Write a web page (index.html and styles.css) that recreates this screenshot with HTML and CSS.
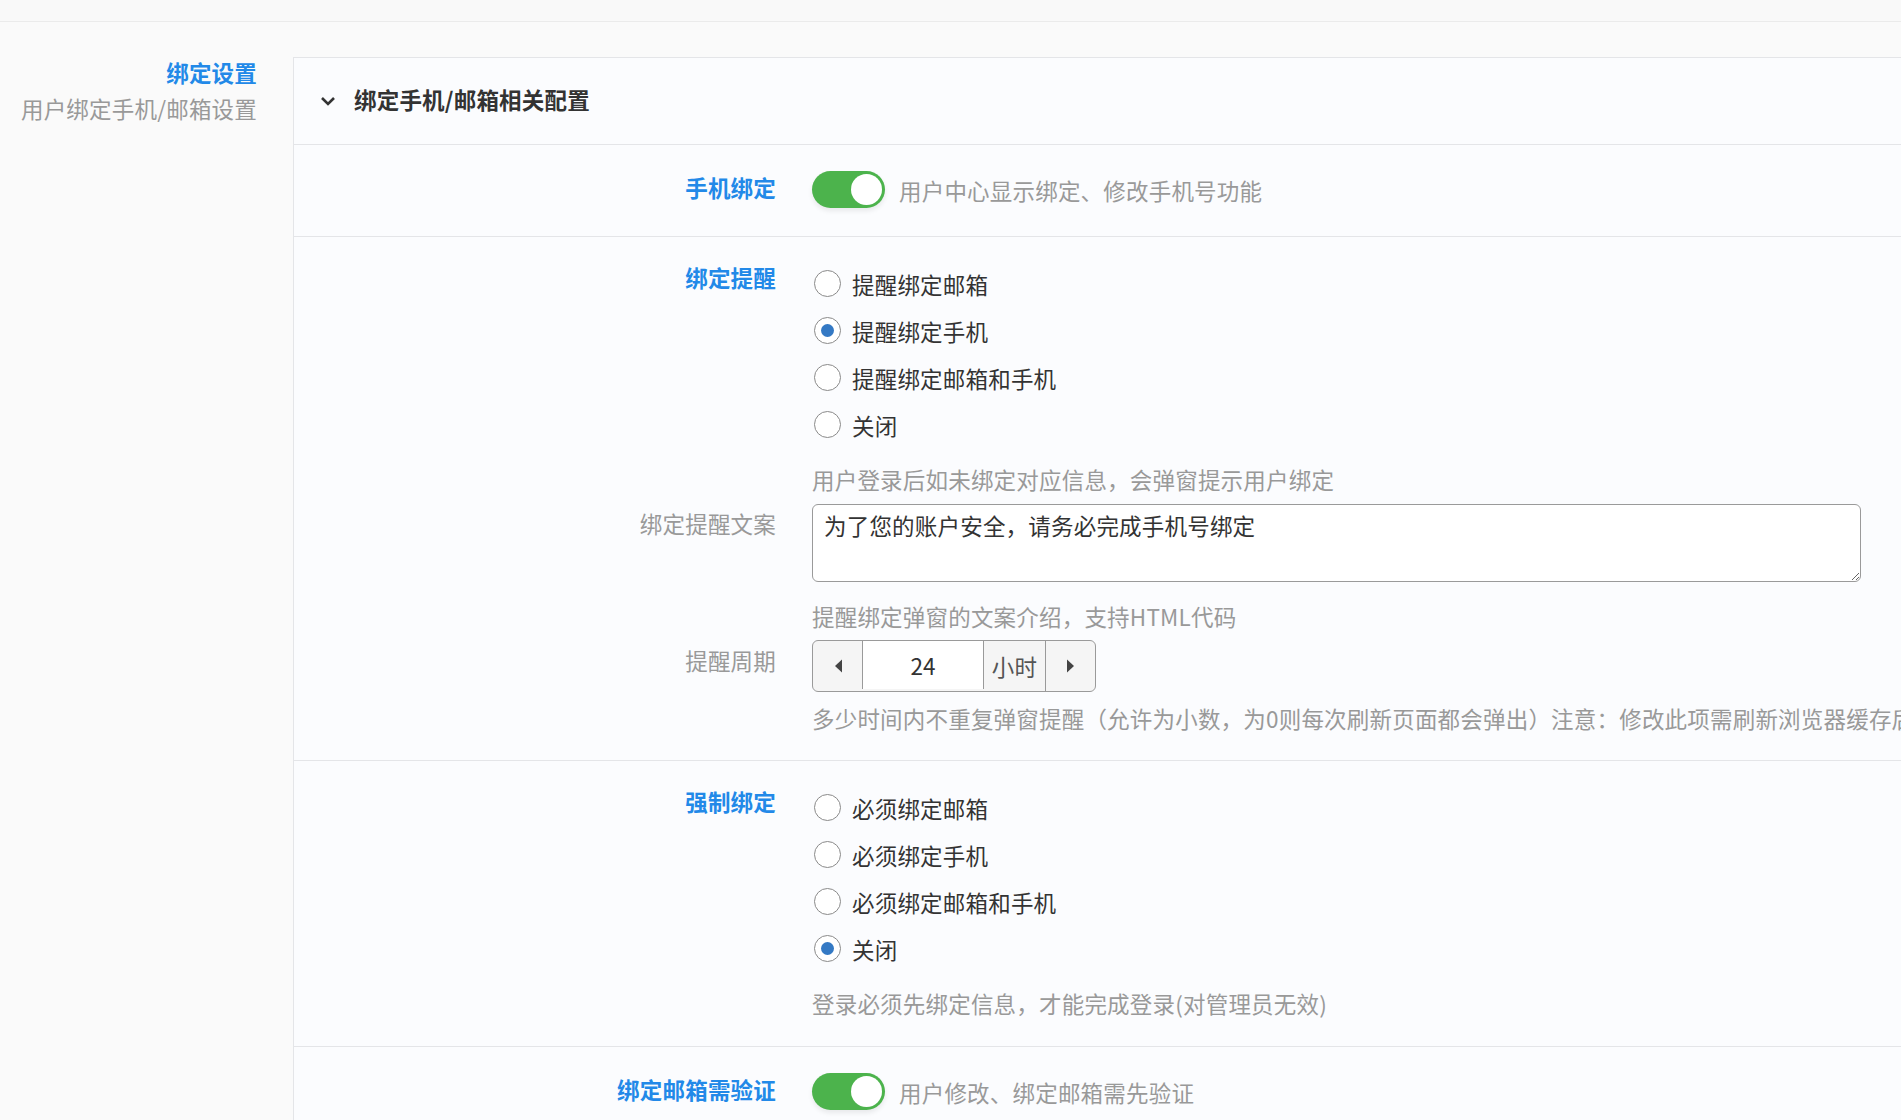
FILE: index.html
```html
<!DOCTYPE html>
<html lang="zh-CN">
	<head>
		<meta charset="UTF-8" />
		<meta name="viewport" content="width=device-width, initial-scale=1.0" />
		<title>绑定设置</title>
		<link rel="stylesheet" href="styles.css">
	</head>

	<body>
		<div class="topbar"></div>

		<div class="main">
			<div class="sidebar">
				<div class="side-title">绑定设置</div>
				<div class="side-desc">用户绑定手机/邮箱设置</div>
			</div>

			<div class="panel">
				<div class="panel-header">
					<svg class="chevron" width="16" height="10" viewBox="0 0 16 10">
						<path d="M2 2 L8 8 L14 2" fill="none" stroke="#333" stroke-width="2.6" />
					</svg>
					<span>绑定手机/邮箱相关配置</span>
				</div>

				<!-- 手机绑定 -->
				<div class="section section-switch">
					<div class="field field-center">
						<label class="field-label strong">手机绑定</label>
						<div class="field-control inline">
							<div class="switch on"></div>
							<span class="switch-text">用户中心显示绑定、修改手机号功能</span>
						</div>
					</div>
				</div>

				<!-- 绑定提醒 -->
				<div class="section">
					<div class="field">
						<label class="field-label strong radio-label">绑定提醒</label>
						<div class="field-control">
							<label class="radio"><input type="radio" name="remind" /> 提醒绑定邮箱</label>
							<label class="radio"><input type="radio" name="remind" checked /> 提醒绑定手机</label>
							<label class="radio"><input type="radio" name="remind" /> 提醒绑定邮箱和手机</label>
							<label class="radio"><input type="radio" name="remind" /> 关闭</label>
							<div class="hint hint-after-radio">用户登录后如未绑定对应信息，会弹窗提示用户绑定</div>
						</div>
					</div>

					<div class="field field-textarea">
						<label class="field-label text-label">绑定提醒文案</label>
						<div class="field-control">
							<textarea class="textarea">为了您的账户安全，请务必完成手机号绑定</textarea>
							<div class="hint hint-after-textarea">提醒绑定弹窗的文案介绍，支持HTML代码</div>
						</div>
					</div>

					<div class="field field-spinner">
						<label class="field-label spinner-label">提醒周期</label>
						<div class="field-control">
							<div class="spinner">
								<div class="spin-btn">
									<svg width="10" height="16" viewBox="0 0 10 16"><path d="M9 1.5 L2 8 L9 14.5 Z" fill="#444" /></svg>
								</div>
								<input class="spin-input" type="text" value="24" />
								<div class="spin-unit">小时</div>
								<div class="spin-btn">
									<svg width="10" height="16" viewBox="0 0 10 16"><path d="M1 1.5 L8 8 L1 14.5 Z" fill="#444" /></svg>
								</div>
							</div>
							<div class="hint hint-after-spinner">多少时间内不重复弹窗提醒（允许为小数，为0则每次刷新页面都会弹出）注意：修改此项需刷新浏览器缓存后生效</div>
						</div>
					</div>
				</div>

				<!-- 强制绑定 -->
				<div class="section section-force">
					<div class="field">
						<label class="field-label strong radio-label">强制绑定</label>
						<div class="field-control">
							<label class="radio"><input type="radio" name="force" /> 必须绑定邮箱</label>
							<label class="radio"><input type="radio" name="force" /> 必须绑定手机</label>
							<label class="radio"><input type="radio" name="force" /> 必须绑定邮箱和手机</label>
							<label class="radio"><input type="radio" name="force" checked /> 关闭</label>
							<div class="hint hint-after-radio">登录必须先绑定信息，才能完成登录(对管理员无效)</div>
						</div>
					</div>
				</div>

				<!-- 绑定邮箱需验证 -->
				<div class="section section-switch">
					<div class="field field-center">
						<label class="field-label strong">绑定邮箱需验证</label>
						<div class="field-control inline">
							<div class="switch on"></div>
							<span class="switch-text">用户修改、绑定邮箱需先验证</span>
						</div>
					</div>
				</div>
			</div>
		</div>
	</body>
</html>
```

FILE: styles.css
```css
:root {
	--page-bg: #fafafa;
	--panel-bg: #fbfcfe;
	--line: #e4e5e8;
	--blue: #2289e8;
	--green: #4cb34c;
	--text: #333;
	--muted: #999;
	--input-border: #9a9a9a;
}

html,
body {
	overflow: hidden;
}

body {
	margin: 0;
	height: 100vh;
	background-color: var(--page-bg);
	color: var(--text);
	font-family: "Noto Sans CJK SC", "Noto Sans", sans-serif;
	font-size: 22.5px;
	line-height: 30px;
	letter-spacing: 0.2px;
}

.topbar {
	height: 21px;
	background-color: #f9f9f9;
	border-bottom: 1px solid #ebebeb;
}

.main {
	display: flex;
	align-items: flex-start;
	padding-top: 35px;
}

/* Left description column */
.sidebar {
	flex: 0 0 257px;
	margin-right: 36px;
	text-align: right;
	white-space: nowrap;
}

.side-title {
	color: var(--blue);
	font-weight: bold;
}

.side-desc {
	margin-top: 6px;
	color: var(--muted);
}

/* Settings panel */
.panel {
	flex: 1;
	margin-right: -2px;
	min-height: 1200px;
	background-color: var(--panel-bg);
	border-top: 1px solid var(--line);
	border-left: 1px solid var(--line);
}

.panel-header {
	display: flex;
	align-items: center;
	box-sizing: border-box;
	height: 87px;
	padding: 0 0 5px 26px;
	border-bottom: 1px solid var(--line);
	font-weight: bold;
	color: #333;
}

.chevron {
	margin: 4px 18px 0 0;
}

.section {
	padding: 23px 0 27px;
	border-bottom: 1px solid var(--line);
}

.section-force {
	padding-bottom: 28px;
}

.section-switch {
	padding: 26px 0 28px;
}

.field {
	display: grid;
	grid-template-columns: 482px 1fr;
	column-gap: 36px;
	align-items: start;
}

.field-center {
	align-items: center;
}

.field-label {
	text-align: right;
	color: var(--muted);
	white-space: nowrap;
}

.field-label.strong {
	color: var(--blue);
	font-weight: bold;
}

.field-center .field-label {
	padding-bottom: 5px;
}

.radio-label {
	padding-top: 2px;
}

.text-label {
	padding-top: 4px;
}

.spinner-label {
	padding-top: 5px;
}

.field-control {
	min-width: 0;
	white-space: nowrap;
}

.inline {
	display: flex;
	align-items: center;
}

/* Toggle switch */
.switch {
	position: relative;
	flex: none;
	width: 73px;
	height: 37px;
	border-radius: 19px;
	background-color: #ddd;
	box-shadow: 0 3px 5px rgba(0, 0, 0, 0.08);
}

.switch.on {
	background-color: var(--green);
}

.switch:after {
	content: "";
	position: absolute;
	top: 3px;
	left: 3px;
	width: 31px;
	height: 31px;
	border-radius: 50%;
	background-color: #fff;
}

.switch.on:after {
	left: 39px;
}

.switch-text {
	margin-left: 14px;
	color: var(--muted);
}

/* Radios */
.radio {
	display: flex;
	align-items: center;
	height: 47px;
	color: var(--text);
}

.radio input {
	appearance: none;
	-webkit-appearance: none;
	position: relative;
	flex: none;
	width: 27px;
	height: 27px;
	margin: 0 11px 0 2px;
	border: 1px solid #8a8a8a;
	border-radius: 50%;
	background-color: #fff;
}

.radio input:checked:after {
	content: "";
	position: absolute;
	top: 6px;
	left: 6px;
	width: 13px;
	height: 13px;
	border-radius: 50%;
	background-color: #3479c4;
}

.hint {
	color: var(--muted);
}

.hint-after-radio {
	margin-top: 16px;
}

.field-textarea {
	margin-top: 10px;
}

.textarea {
	display: block;
	box-sizing: border-box;
	width: 1049px;
	height: 78px;
	padding: 5px 11px;
	border: 1px solid var(--input-border);
	border-radius: 6px;
	background-color: #fff;
	color: var(--text);
	font-family: inherit;
	font-size: 22.5px;
	line-height: 30px;
	letter-spacing: 0.2px;
}

.hint-after-textarea {
	margin-top: 19px;
}

/* Number spinner */
.field-spinner {
	margin-top: 9px;
}

.spinner {
	display: inline-flex;
	height: 50px;
	border: 1px solid var(--input-border);
	border-radius: 6px;
	overflow: hidden;
	background-color: #f5f5f5;
}

.spin-btn {
	display: flex;
	align-items: center;
	justify-content: center;
	width: 49px;
}

.spin-input {
	box-sizing: border-box;
	width: 122px;
	height: 48px;
	margin: 0;
	padding: 0;
	border: none;
	border-left: 1px solid var(--input-border);
	border-right: 1px solid var(--input-border);
	background-color: #fff;
	color: var(--text);
	text-align: center;
	font-family: inherit;
	font-size: 22.5px;
}

.spin-unit {
	display: flex;
	align-items: center;
	justify-content: center;
	width: 61px;
	border-right: 1px solid var(--input-border);
	color: #555;
}

.hint-after-spinner {
	margin-top: 11px;
}
```
